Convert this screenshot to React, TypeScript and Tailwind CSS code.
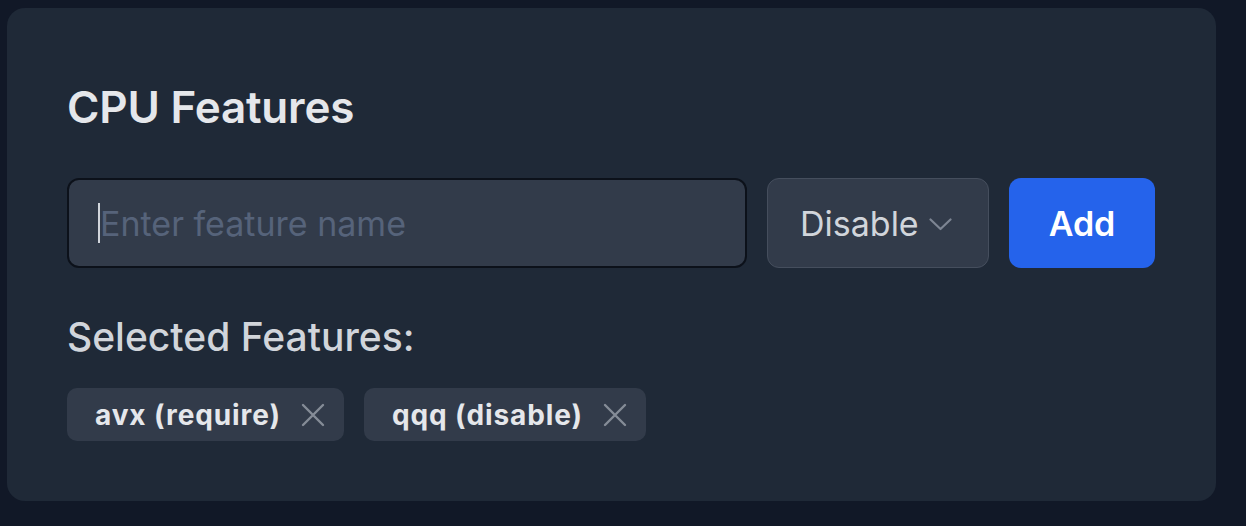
import { useState } from 'react'

type Feature = { name: string; mode: 'require' | 'disable' }

function XIcon() {
  return (
    <svg width="24" height="24" viewBox="0 0 24 24" fill="none" stroke="currentColor" strokeWidth="2.4" strokeLinecap="round">
      <path d="M2 2 L22 22 M22 2 L2 22" />
    </svg>
  )
}

export default function App() {
  const [name, setName] = useState('')
  const [features, setFeatures] = useState<Feature[]>([
    { name: 'avx', mode: 'require' },
    { name: 'qqq', mode: 'disable' },
  ])

  return (
    <div className="min-h-[526px] w-full bg-[#111827] pt-[8px] pl-[7px] font-['Inter',sans-serif]">
      <div className="w-[1209px] h-[493px] rounded-[18px] bg-[#1f2937] px-[60px] pt-[71px]">
        <h2 className="text-[44px] leading-[56px] font-semibold text-[#e5e7eb] tracking-[-0.2px] mb-[43px]">CPU Features</h2>

        <div className="flex items-center gap-[20px]">
          <div className="relative">
            <input
              autoFocus
              value={name}
              onChange={(e) => setName(e.target.value)}
              placeholder="Enter feature name"
              className="w-[680px] h-[90px] rounded-[12px] border-2 border-[#0c111a] bg-[#323b4a] pl-[31px] text-[34px] text-[#e5e7eb] placeholder:text-[#56637a] outline-none caret-transparent"
            />
            {name === '' && <span className="pointer-events-none absolute left-[31px] top-[25px] h-[40px] w-[2px] bg-[#d1d5db]" />}
          </div>
          <button className="w-[222px] h-[90px] rounded-[12px] border border-[#454e5d] bg-[#323b4a] flex items-center pl-[32px] text-[34px] text-[#d1d5db]">
            <span>Disable</span>
            <svg className="ml-[10px] mt-[2px]" width="23" height="13" viewBox="0 0 23 13" fill="none" stroke="#7d8593" strokeWidth="2.2" strokeLinecap="round" strokeLinejoin="round">
              <path d="M1.5 1.5 L11.5 11 L21.5 1.5" />
            </svg>
          </button>
          <button className="w-[146px] h-[90px] rounded-[12px] bg-[#2563eb] text-[34px] font-semibold text-white">Add</button>
        </div>

        <h3 className="mt-[45px] text-[39px] leading-[48px] font-medium text-[#d1d5db]">Selected Features:</h3>

        <div className="mt-[27px] flex gap-[20px]">
          {features.map((f) => (
            <div key={f.name} className="h-[53px] rounded-[10px] bg-[#323b4a] flex items-center pl-[28px] pr-[19px] gap-[20px]">
              <span className="text-[28px] font-bold tracking-[0.9px] text-[#e5e7eb]">
                {f.name} ({f.mode})
              </span>
              <button
                className="text-[#858c97]"
                onClick={() => setFeatures(features.filter((x) => x.name !== f.name))}
              >
                <XIcon />
              </button>
            </div>
          ))}
        </div>
      </div>
    </div>
  )
}
